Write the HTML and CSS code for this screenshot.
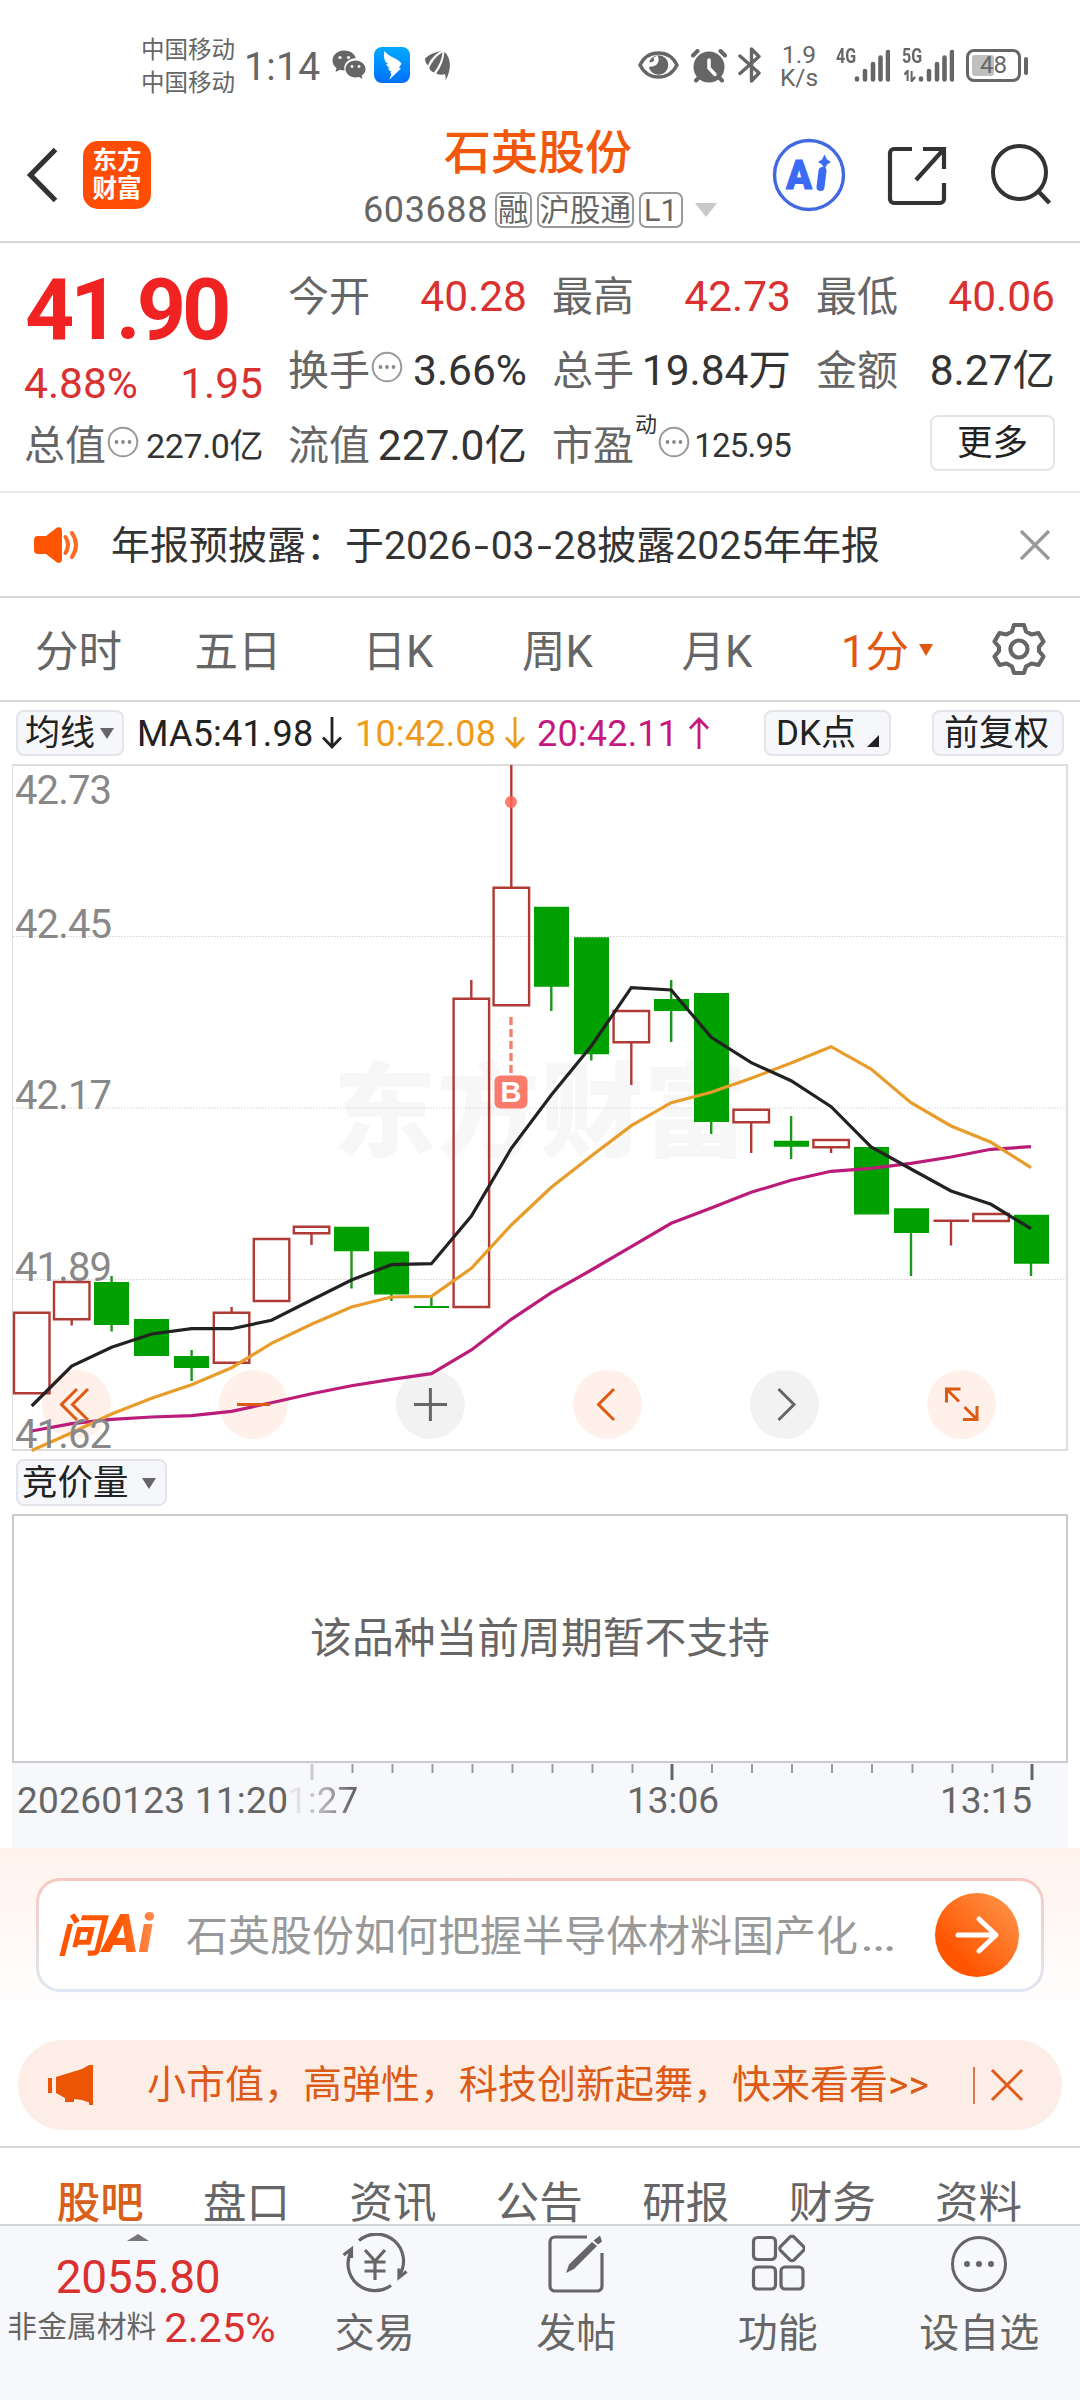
FILE: index.html
```html
<!DOCTYPE html>
<html lang="zh-CN">
<head>
<meta charset="utf-8">
<title>石英股份 603688</title>
<link rel="stylesheet" href="styles.css">
</head>
<body>
<svg class="defs" aria-hidden="true">
  <symbol id="dots" viewBox="0 0 32 32"><circle cx="16" cy="16" r="14.300" fill="none" stroke="#999" stroke-width="2"/><g fill="#888"><circle cx="9.500" cy="16" r="1.900"/><circle cx="16" cy="16" r="1.900"/><circle cx="22.500" cy="16" r="1.900"/></g></symbol>
  <symbol id="bars" viewBox="0 0 36 34"><path d="M3 29.500v1M11 22v8.500M19 15v15.500M26.500 8.500v22M34 3v27.500" fill="none" stroke="#666" stroke-width="4.600" stroke-linecap="round"/></symbol>
</svg>

<header class="status">
  <div class="carrier"><span>中国移动</span><span>中国移动</span></div>
  <span class="clock">1:14</span>
  <svg class="i-wechat" width="34" height="30" viewBox="0 0 34 30"><path d="M12 .5C5.500.500.500 5 .5 10.500c0 3 1.500 5.500 4 7.500L3.500 22l4.500-2.200c1.500.500 3 .600 4.500.600-1.500-7 4-12.200 11.300-12.200C22.500 3.500 18 .500 12 .500z" fill="#666"/><path d="M23.500 10.500c-5.500 0-10 3.700-10 8.500s4.500 8.500 10 8.500c1.200 0 2.400-.2 3.500-.500l3.500 2-.800-3.300c2.300-1.600 3.800-4 3.800-6.700 0-4.800-4.500-8.500-10-8.500z" fill="#666"/><g fill="#fff"><circle cx="8" cy="7.500" r="1.600"/><circle cx="16.500" cy="7.500" r="1.600"/><circle cx="20" cy="16.500" r="1.400"/><circle cx="27" cy="16.500" r="1.400"/></g></svg>
  <svg class="i-wing" width="36" height="36" viewBox="0 0 36 36"><defs><linearGradient id="bl" x1="0" y1="0" x2="0" y2="1"><stop offset="0" stop-color="#0af"/><stop offset="1" stop-color="#0070fb"/></linearGradient></defs><rect width="36" height="36" rx="8" fill="url(#bl)"/><path d="M10.500 4C9.500 8 10 12 11.500 15l3 2-2.300-.3c.6 2 1.800 3.600 4 4.600l-2.300.2c1 1.700 2 2.700 3.800 3.300l-1.700 1.200 1.500.8-2.300 6L27 21.500l-2-.5 2.500-4.500C24 11 14.500 10 10.500 4z" fill="#fff"/></svg>
  <svg class="i-leaf" width="26" height="30" viewBox="0 0 26 30"><g fill="#666"><path d="M0 7.500C5 3 10 1 16.500 0 9.500 3.500 5.500 8 3 14.500 1 12.500 0 10.500 0 7.500z"/><path d="M17.500 1.200C17 8 14 15 9 21.500 6.500 20.500 5 19 4.200 17 7.500 9.500 11.500 5 17.500 1.200z"/><path d="M19.500.8C26 7 27 18 20.500 29.500c.3-3 .2-5-.7-6.500-2.800 1-5.800.8-8.600-.6C16 16 18.800 9 19.500.800z"/></g></svg>
  <svg class="i-eye" width="41" height="28" viewBox="0 0 41 28"><path d="M2 14C6 6 13 2 20.500 2S35 6 39 14C35 22 28 26 20.500 26S6 22 2 14z" fill="none" stroke="#666" stroke-width="3.400"/><circle cx="20.500" cy="14" r="9.800" fill="#666"/><path d="M17.500 5.500c2.500 5-.5 8.500-7 8" fill="none" stroke="#fff" stroke-width="4.500"/></svg>
  <svg class="i-alarm" width="36" height="34" viewBox="0 0 36 34"><circle cx="18" cy="18" r="15.500" fill="#666"/><path d="M2 6.500L6.500 2M34 6.500L29.500 2M5 31.500l3-3M31 31.500l-3-3" stroke="#666" stroke-width="4" stroke-linecap="round"/><path d="M18 11v8l6 6.500" fill="none" stroke="#fff" stroke-width="3.500" stroke-linecap="round"/></svg>
  <svg class="i-bt" width="24" height="36" viewBox="0 0 24 36"><path d="M2 9l19 17-7.500 8V2L21 9.500 2 26.500" fill="none" stroke="#666" stroke-width="3.400" stroke-linejoin="round" stroke-linecap="round"/></svg>
  <div class="speed"><span>1.9</span><span>K/s</span></div>
  <span class="gen gen4">4G</span>
  <svg class="i-sig1" width="36" height="34"><use href="#bars"/></svg>
  <div class="gen gen5"><span>5G</span><svg width="16" height="12" viewBox="0 0 16 12"><path d="M1 4.500L5 1v10M10 1v10l4.500-4" fill="none" stroke="#666" stroke-width="2.600"/></svg></div>
  <svg class="i-sig2" width="36" height="34"><use href="#bars"/></svg>
  <div class="battery"><i></i><b>48</b></div><i class="nub"></i>
</header>

<nav class="head">
  <svg class="i-back" width="32" height="56" viewBox="0 0 32 56"><path d="M29.500 2.500L4.500 28l25 25.500" fill="none" stroke="#333" stroke-width="5.200"/></svg>
  <div class="logo"><span>东方</span><span>财富</span></div>
  <div class="title">
    <h1>石英股份</h1>
    <div class="code"><span class="num">603688</span><span class="tag">融</span><span class="tag">沪股通</span><span class="tag l1">L1</span><i class="tri"></i></div>
  </div>
  <svg class="i-ai" width="74" height="74" viewBox="0 0 74 74"><circle cx="37" cy="37" r="34.500" fill="none" stroke="#4169e1" stroke-width="3.400"/><text x="14" y="51" class="aitext" textLength="26" lengthAdjust="spacingAndGlyphs">A</text><path d="M50.500 33l-2 16" stroke="#3b6af5" stroke-width="8" stroke-linecap="round"/><path d="M52.500 16.500l2.500 5 4 2.500-4 2.500-2.500 5-2.500-5-4-2.500 4-2.500z" fill="#3b6af5"/></svg>
  <svg class="i-share" width="60" height="60" viewBox="0 0 60 60"><path d="M25 3H7a4 4 0 0 0-4 4v46a4 4 0 0 0 4 4h46a4 4 0 0 0 4-4V37M36 3h21v20M57 3L29 34" fill="none" stroke="#333" stroke-width="4.200"/></svg>
  <svg class="i-search" width="62" height="62" viewBox="0 0 62 62"><circle cx="29.500" cy="29.500" r="26.500" fill="none" stroke="#333" stroke-width="4"/><path d="M48 48l11.500 12" stroke="#333" stroke-width="4.400"/></svg>
</nav>

<section class="quote">
  <div class="last"><div class="price">41.90</div><div class="chg"><span>4.88%</span><span>1.95</span></div></div>
  <div class="cell"><label>今开</label><b class="up">40.28</b></div>
  <div class="cell"><label>最高</label><b class="up">42.73</b></div>
  <div class="cell"><label>最低</label><b class="up">40.06</b></div>
  <div class="cell"><label>换手</label><svg class="dots" width="32" height="32"><use href="#dots"/></svg><b>3.66%</b></div>
  <div class="cell"><label>总手</label><b>19.84万</b></div>
  <div class="cell"><label>金额</label><b>8.27亿</b></div>
  <div class="cell"><label>总值</label><svg class="dots" width="32" height="32"><use href="#dots"/></svg><b class="sm">227.0亿</b></div>
  <div class="cell"><label>流值</label><b>227.0亿</b></div>
  <div class="cell"><label>市盈</label><sup>动</sup><svg class="dots" width="32" height="32"><use href="#dots"/></svg><b class="sm pe">125.95</b></div>
  <div class="cell last-cell"><button class="more">更多</button></div>
</section>

<section class="notice">
  <svg width="46" height="38" viewBox="0 0 46 38"><path d="M0 14a4 4 0 0 1 4-4h8L23 1.500Q28 0 28 5v28q0 5-5 3.500L12 28H4a4 4 0 0 1-4-4z" fill="#ff5500"/><path d="M31.500 11q5 8 0 16M38 7q8 12 0 24" fill="none" stroke="#ff6a20" stroke-width="4" stroke-linecap="round"/></svg>
  <p>年报预披露：于2026<i>-</i>03<i>-</i>28披露2025年年报</p>
  <svg class="close" width="32" height="32" viewBox="0 0 32 32"><path d="M2 2l28 28M30 2L2 30" stroke="#999" stroke-width="3.200"/></svg>
</section>

<nav class="periods">
  <span>分时</span><span class="p2">五日</span><span>日K</span><span>周K</span><span>月K</span><span class="on">1分<i></i></span>
  <svg width="54" height="54" viewBox="0 0 54 54"><g fill="none" stroke="#666" stroke-width="4.200"><path d="M22 3h10l2 6.500 5.500 3 7-1.500 5 8.500-4.500 5.500v4l4.500 5.500-5 8.500-7-1.500-5.500 3L32 51H22l-2-6.500-5.500-3-7 1.500-5-8.500L7 29v-4l-4.500-5.500 5-8.500 7 1.500 5.500-3z" stroke-linejoin="round"/><circle cx="27" cy="27" r="8.500"/></g></svg>
</nav>

<section class="ma">
  <button class="b-ma">均线<i></i></button>
  <span class="m5">MA5:41.98</span><svg width="20" height="32" viewBox="0 0 20 32"><path d="M10 0v30M1 20.500l9 9.500 9-9.500" fill="none" stroke="#222" stroke-width="2.800"/></svg>
  <span class="m10">10:42.08</span><svg width="20" height="32" viewBox="0 0 20 32"><path d="M10 0v30M1 20.500l9 9.500 9-9.500" fill="none" stroke="#f09a1a" stroke-width="2.800"/></svg>
  <span class="m20">20:42.11</span><svg width="20" height="32" viewBox="0 0 20 32"><path d="M10 32V2M1 11.500L10 2l9 9.500" fill="none" stroke="#c41a80" stroke-width="2.800"/></svg>
  <button class="b-dk">DK点<i></i></button>
  <button class="b-fq">前复权</button>
</section>

<svg class="chart" width="1080" height="698" viewBox="0 757 1080 698">
  <text class="wm" x="333" y="1149" textLength="414">东方财富</text>
  <g class="frame"><path d="M12.500 765V1450"/><path d="M12 765H1067V1450H12" stroke-width="2.200"/></g>
  <path class="grid" d="M13 936.500H1066M13 1108H1066M13 1279.500H1066"/>
  <g class="ctl">
    <g fill="#fff1ea"><circle cx="76.400" cy="1404.400" r="34.500"/><circle cx="253.400" cy="1404.400" r="34.500"/><circle cx="607.500" cy="1404.400" r="34.500"/><circle cx="961.600" cy="1404.400" r="34.500"/></g>
    <g fill="#f2f2f2"><circle cx="430.400" cy="1404.400" r="34.500"/><circle cx="784.500" cy="1404.400" r="34.500"/></g>
  </g>
  <path class="up-k" d="M14 1312.700h35.500v80.600h-35.500zM54 1282h35.500v37.300h-35.500zM71.700 1319v6.500M213.800 1312.700h35.500v50h-35.500zM231.600 1307v6M253.800 1239h35.500v62h-35.500zM293.800 1226.700h35.500v6.600h-35.500zM311.500 1233v12M453.600 998.700h35.500v308.300h-35.500zM471.300 980v18.500M493.600 887.700h35.500v117.600h-35.500zM511.300 765v122.500M613.600 1011h35.500v31.300h-35.500zM631.300 1042v43M733.500 1109.700h35.500v12.600h-35.500zM751.200 1122v31M813.400 1140h35.500v7.300h-35.500zM831.100 1147v6M933.500 1220.700h35.500M951 1221v24.500M973.300 1214h35.500v7h-35.500z"/>
  <path class="dn-w" d="M111.600 1276v55.500M191.600 1350v31M351.500 1251v37.500M391.400 1294v7M431.400 1296v11M551.300 986v25M591.300 1054v6.500M671.200 980v62M711.200 1122v12M791.100 1116v43M911 1233v43M1031 1263v13"/>
  <path class="dn-b" d="M94 1282h35v43h-35zM134 1319h35v37h-35zM174 1356h35v12h-35zM334 1226.700h35v24.600h-35zM374 1251.500h35v43h-35zM414 1306h35v2h-35zM534 906.700h35v80h-35zM574 937.300h35v117h-35zM654 999h35v12h-35zM694 993h35v129h-35zM774 1140.700h35v6h-35zM854 1147h35v67.500h-35zM894 1208.300h35v24.700h-35zM1014 1214.700h35v49h-35z"/>
  <polyline class="l20" points="31.700,1431 71.700,1423.700 111.600,1419.300 151.600,1417 191.600,1415.700 231.600,1411.300 271.500,1402.700 311.500,1393.700 351.500,1385.700 391.400,1379.300 431.400,1373.700 471.400,1350 511.300,1319.300 551.300,1292.700 591.300,1270 631.300,1246.700 671.200,1223.300 711.200,1208 751.200,1192.300 791.100,1180.300 831.100,1171.300 871.100,1168.300 911,1163.300 951,1157 991,1149.300 1031,1146.700"/>
  <polyline class="l10" points="31.700,1450.500 71.700,1432.700 111.600,1414 151.600,1398.300 191.600,1384.700 231.600,1367.700 271.500,1343.300 311.500,1324.300 351.500,1307 391.400,1297 431.400,1296.300 471.400,1268.300 511.300,1225 551.300,1187.300 591.300,1156 631.300,1125.700 671.200,1102.700 711.200,1092.300 751.200,1078.300 791.100,1063 831.100,1046.700 871.100,1069 911,1102.700 951,1126 991,1142.300 1031,1167.700"/>
  <polyline class="l5" points="31.700,1406 71.700,1366 111.600,1347.300 151.600,1334 191.600,1328.700 231.600,1328.700 271.500,1320.300 311.500,1300 351.500,1280 391.400,1264.700 431.400,1263.700 471.400,1216 511.300,1148.300 551.300,1095 591.300,1046 631.300,987.700 671.200,990 711.200,1037.300 751.200,1062.700 791.100,1080.700 831.100,1106.700 871.100,1147 911,1169 951,1191 991,1204.300 1031,1228.700"/>
  <g fill="none" stroke-width="3"><path class="or" d="M77 1389l-15.500 15.500 15.500 15.500M88 1389l-15.500 15.500 15.500 15.500M237 1404.500h33M614 1389l-15.500 15.500 15.500 15.500"/><path stroke="#666" d="M414 1404.500h33M430.400 1388v33M778.500 1389l15.500 15.500-15.500 15.500"/><path class="or" d="M946.500 1402.500v-13.500h14M946.500 1389l12.500 12.500M963 1419.500h14v-13.500M977 1419.500l-12.500-12.500"/></g>
  <circle cx="511" cy="802" r="6" fill="#ff6455" fill-opacity=".85"/>
  <path d="M511 1017v58" stroke="#f08070" stroke-width="3.400" stroke-dasharray="8 4"/>
  <rect x="494.500" y="1075.500" width="33" height="33" rx="6" fill="#fa7b6b"/>
  <text class="bmark" x="511" y="1102">B</text>
  <g class="lab"><text x="15" y="804" textLength="97">42.73</text><text x="15" y="938" textLength="97">42.45</text><text x="15" y="1109" textLength="97">42.17</text><text x="15" y="1281" textLength="97">41.89</text><text x="15" y="1448" textLength="97">41.62</text></g>
</svg>

<div class="sub"><button class="b-vol">竞价量<i></i></button></div>
<section class="empty">该品种当前周期暂不支持</section>
<section class="axis">
  <svg width="1056" height="18" viewBox="12 0 1056 18"><path d="M312 1v16" stroke="#ccc" stroke-width="3"/><path d="M352.500 1v9M392.500 1v9M432.500 1v9M472.500 1v9M512.500 1v9M552.500 1v9M592.500 1v9M632.500 1v9M712 1v9M752 1v9M792 1v9M832 1v9M872 1v9M912.500 1v9M952.500 1v9M992.500 1v9" stroke="#999" stroke-width="2"/><path d="M672 1v16M1032 1v16" stroke="#666" stroke-width="3"/></svg>
  <div class="times"><span class="t1">20260123 11:20</span><span class="fade">1:27</span><span class="t2">13:06</span><span class="t3">13:15</span></div>
</section>

<section class="ask">
  <div class="askbox"><span class="asklogo"><b>问</b>Ai</span><p>石英股份如何把握半导体材料国产化<em>…</em></p>
    <svg width="84" height="84" viewBox="0 0 84 84"><defs><linearGradient id="og" x1="1" y1="0" x2=".25" y2=".75"><stop offset="0" stop-color="#ff9a50"/><stop offset="1" stop-color="#ff5500"/></linearGradient></defs><circle cx="42" cy="42" r="42" fill="url(#og)"/><path d="M23 42h37M44 26l17 16-17 16" fill="none" stroke="#fff" stroke-width="5" stroke-linecap="round" stroke-linejoin="round"/></svg>
  </div>
</section>
<section class="promo">
  <svg width="46" height="40" viewBox="0 0 46 40"><path d="M0 13h4v15H0zM8 12l26-8 7-4h4v40h-4V37.500L34 35l-8-1v3h-9v-4L8 28z" fill="#eb5503"/></svg>
  <p>小市值，高弹性，科技创新起舞，快来看看&gt;&gt;</p>
  <i></i>
  <svg class="pclose" width="34" height="34" viewBox="0 0 34 34"><path d="M2 2l30 30M32 2L2 32" stroke="#e05a1a" stroke-width="3"/></svg>
</section>

<nav class="tabs"><span class="on">股吧</span><span>盘口</span><span>资讯</span><span>公告</span><span>研报</span><span>财务</span><span>资料</span></nav>

<footer class="bottom">
  <div class="index"><i></i><strong>2055.80</strong><div><span>非金属材料</span><b>2.25%</b></div></div>
  <div class="act"><svg width="66" height="60" viewBox="0 0 66 60"><g fill="none" stroke="#666" stroke-width="3.200"><path d="M17 7.500A27 27 0 0 1 57 43M49 52.500A27 27 0 0 1 9.500 17.500"/><path d="M1.500 22L9.500 16v9M57 35.500v9l7.500-6"/><path d="M23 17l10 11 10-11M33 28v19M22.500 29h21M22.500 38h21"/></g></svg><span>交易</span></div>
  <div class="act"><svg width="58" height="60" viewBox="0 0 58 60"><g fill="none" stroke="#666"><path d="M40 4H8a5 5 0 0 0-5 5v44a5 5 0 0 0 5 5h42a5 5 0 0 0 5-5V20" stroke-width="3.200"/></g><path d="M19 40l3-8.500L45 9l5 4-23 23zM46.500 7.500L53 2.500l2 6-4 3z" fill="#666"/></svg><span>发帖</span></div>
  <div class="act"><svg width="54" height="60" viewBox="0 0 54 60"><g fill="none" stroke="#666" stroke-width="3.200"><rect x="2.500" y="4.500" width="22" height="22" rx="4"/><rect x="2.500" y="34" width="22" height="22" rx="4"/><rect x="30" y="34" width="22" height="22" rx="4"/><rect x="31.500" y="6" width="19" height="19" rx="3" transform="rotate(45 41 15.500)"/></g></svg><span>功能</span></div>
  <div class="act"><svg width="60" height="60" viewBox="0 0 60 60"><circle cx="30" cy="31" r="26.500" fill="none" stroke="#666" stroke-width="3"/><g fill="#666"><circle cx="18" cy="31" r="3"/><circle cx="30" cy="31" r="3"/><circle cx="42" cy="31" r="3"/></g></svg><span>设自选</span></div>
</footer>
</body>
</html>
```
FILE: styles.css
```css
* { box-sizing: border-box; margin: 0; padding: 0; }
body { width: 1080px; height: 2400px; overflow: hidden; background: #fff; color: #333; font-family: Roboto, "Noto Sans CJK SC", sans-serif; font-size: 41px; line-height: 1; }
svg { display: block; flex: none; }
i, em { font-style: normal; }
b { font-weight: 400; }
button { font: inherit; color: #222; border: 2px solid #e3e5ea; background: #f6f7fb; border-radius: 8px; display: flex; align-items: center; white-space: nowrap; flex: none; }
span, p { white-space: nowrap; }
.defs { position: absolute; width: 0; height: 0; }

/* status bar */
.status { height: 100px; padding: 36px 0 0 141px; display: flex; align-items: flex-start; color: #666; }
.status > * { flex: none; }
.carrier { width: 103px; display: flex; flex-direction: column; font-size: 23.500px; line-height: 33px; margin-top: -2px; }
.clock { width: 88px; font-size: 39px; line-height: 62px; letter-spacing: .300px; }
.i-wechat { margin-top: 14px; }
.i-wing { margin: 11px 0 0 8px; }
.i-leaf { margin: 15px 0 0 15px; }
.i-eye { margin: 15px 0 0 187px; }
.i-alarm { margin: 13px 0 0 12px; }
.i-bt { margin: 11px 0 0 11px; }
.speed { width: 38px; margin: 7px 0 0 18px; display: flex; flex-direction: column; align-items: center; font-size: 24.500px; line-height: 23px; }
.gen { font-size: 20px; font-weight: 700; line-height: 18px; transform: scaleX(.8); transform-origin: 0 0; }
.gen4 { width: 18px; margin: 11px 0 0 18px; }
.i-sig1 { margin-top: 13px; }
.gen5 { width: 16px; margin: 11px 0 0 12px; display: flex; flex-direction: column; gap: 5px; }
.gen5 svg { width: 20px; }
.i-sig2 { margin-top: 13px; }
.battery { width: 55px; height: 33px; margin: 13px 0 0 12px; border: 3.500px solid #666; border-radius: 8px; padding: 3px; position: relative; }
.battery i { display: block; width: 22px; height: 100%; background: #bfbfbf; border-radius: 3px; }
.battery b { position: absolute; left: 0; right: 0; top: 0; text-align: center; font-size: 24px; line-height: 27px; }
.nub { width: 4px; height: 18px; margin: 21px 0 0 3px; background: #666; border-radius: 2px; }

/* header */
.head { height: 143px; border-bottom: 2px solid #d6d6d6; display: flex; align-items: flex-start; padding-left: 26px; }
.i-back { margin-top: 47px; }
.logo { width: 68px; height: 68px; margin: 41px 0 0 25px; border-radius: 15px; background: #ff4d05; color: #fff; font-weight: 700; font-size: 24.500px; line-height: 28px; display: flex; flex-direction: column; align-items: center; padding-top: 6px; flex: none; }
.title { width: 621px; display: flex; flex-direction: column; flex: none; }
.title h1 { font-size: 47px; line-height: 60px; font-weight: 500; color: #f1580c; margin: 23px 0 0 293px; }
.code { display: flex; align-items: center; color: #666; margin: 8px 0 0 212px; height: 38px; font-size: 36px; }
.code .num { width: 132px; letter-spacing: .600px; }
.tag { height: 36px; border: 2px solid #999; border-radius: 7px; font-size: 30.500px; line-height: 33px; padding: 0 1px; margin-right: 5px; }
.l1 { padding: 0 3px; }
.tri { border: 11px solid transparent; border-top: 14px solid #c9c9c9; border-bottom: 0; margin-left: 7px; }
.i-ai { margin: 38px 0 0 0; }
.aitext { font: 900 40px Roboto, sans-serif; fill: #3b6af5; stroke: #3b6af5; stroke-width: 1; }
.i-share { margin: 46px 0 0 41px; }
.i-search { margin: 43px 0 0 43px; }

/* quote grid */
.quote { height: 250px; padding: 17px 24px 0 24px; border-bottom: 2px solid #ececec; display: grid; grid-template-columns: 239px 239px 239px 239px; grid-template-rows: 74px 74px 76px; column-gap: 25px; }
.last { grid-row: 1 / 3; color: #f02222; }
.price { height: 100px; line-height: 100px; font-size: 86px; font-weight: 700; letter-spacing: -4px; margin-left: 1px; }
.chg { display: flex; justify-content: space-between; line-height: 48px; color: #d93030; font-size: 42.500px; }
.cell { display: flex; align-items: center; line-height: 74px; white-space: nowrap; }
.cell label { color: #666; }
.cell b { margin-left: auto; font-size: 42.500px; }
.cell .up { color: #d93030; }
.cell .sm { font-size: 34px; letter-spacing: -.400px; }
.cell .pe { font-size: 33px; letter-spacing: -.800px; }
.cell sup { font-size: 22px; align-self: flex-start; line-height: 34px; margin-left: 1px; }
.dots { margin: -8px 0 0 1px; }
.more { margin-left: auto; width: 125px; height: 56px; background: #fff; justify-content: center; font-size: 35.500px; margin-top: -6px; }

.notice { height: 105px; border-bottom: 2px solid #d6d6d6; display: flex; align-items: center; padding: 1px 29px 0 34px; }
.notice p { font-size: 39px; margin-left: 31px; margin-top: 2px; }
.notice p i { display: inline-block; width: 19px; text-align: center; transform: scaleX(1.350); }
.close { margin-left: auto; }

.periods { height: 104px; border-bottom: 2px solid #d6d6d6; display: flex; align-items: center; padding-left: 35px; font-size: 43.500px; color: #666; }
.periods span { width: 159.500px; line-height: 98px; padding-top: 7px; }
.periods .p2 { width: 168px; }
.periods .on { width: 150.500px; color: #e0570f; display: flex; align-items: center; }
.periods .on i { border: 7px solid transparent; border-top: 12px solid #e0570f; border-bottom: 0; margin: -6px 0 0 10px; }

.ma { height: 55px; display: flex; align-items: center; padding: 6px 16px 0 16px; font-size: 36px; }
.ma button { height: 46px; font-size: 35px; padding: 1px 7px 0; }
.ma span { padding-top: 2px; }
.b-ma { width: 108px; }
.b-ma i, .b-vol i { border: 7.500px solid transparent; border-top: 11px solid #666; border-bottom: 0; margin-left: 5px; }
.m5 { width: 185px; margin-left: 13px; color: #222; letter-spacing: .200px; }
.m10 { width: 150px; margin-left: 13px; color: #f09a1a; letter-spacing: .200px; }
.m20 { width: 152px; margin-left: 12px; color: #c41a80; letter-spacing: .200px; }
.ma .b-dk { width: 127px; margin-left: 55px; padding-left: 10px; }
.b-dk i { border: 6px solid transparent; border-right-color: #222; border-bottom-color: #222; margin: 16px 0 0 11px; }
.ma .b-fq { width: 132px; margin-left: auto; padding-left: 10px; }

/* chart */
.frame path { fill: none; stroke: #dedede; }
.grid { stroke: #d4d4d4; stroke-width: 1; stroke-dasharray: 1.500 1.500; }
.wm { font: 900 103px "Noto Sans CJK SC", sans-serif; fill: #f7f7f7; }
.up-k { fill: none; stroke: #b03a36; stroke-width: 2.400; }
.dn-w { stroke: #1c961c; stroke-width: 2.400; }
.dn-b { fill: #00a000; }
.l5, .l10, .l20 { fill: none; stroke-width: 3.200; }
.l5 { stroke: #222; }
.l10 { stroke: #e89c2a; }
.l20 { stroke: #bb1c7a; }
.or { stroke: #dc5a14; }
.bmark { font: 700 29px "Liberation Sans", sans-serif; fill: #fff; text-anchor: middle; }
.lab text { font-size: 40px; fill: #888; }

.sub { height: 59px; padding: 4px 0 0 16px; }
.b-vol { width: 151px; height: 47px; font-size: 35.500px; padding: 2px 4px 0; }
.b-vol i { margin-left: 13px; }
.empty { height: 249px; margin: 0 12px; border: 2px solid #ccc; display: flex; align-items: center; justify-content: center; font-size: 41.800px; color: #666; }
.axis { height: 85px; margin: 0 12px; background: #f7f8fb; }
.times { display: flex; color: #666; font-size: 37px; line-height: 40px; padding: 0 0 0 5px; }
.times span { flex: none; }
.times .t1 { width: 270px; letter-spacing: .250px; }
.times .fade { width: 340px; color: transparent; background: linear-gradient(90deg, #eee 0, #ddd 14px, #aaa 40px, #666 65px); -webkit-background-clip: text; background-clip: text; }
.times .t2 { width: 313px; }
.times .t3 { width: auto; }

.ask { height: 192px; background: linear-gradient(#fff2ed, #fff 88%); padding: 30px 36px 0; }
.askbox { height: 114px; border: 3px solid transparent; border-radius: 24px; background: linear-gradient(#fff, #fff) padding-box, linear-gradient(#f6c8c0, #dfe7f3) border-box; display: flex; align-items: center; padding: 0 22px 0 18px; }
.asklogo { width: 102px; margin-right: 27px; font-size: 54px; font-weight: 900; font-style: italic; color: transparent; background: linear-gradient(90deg, #ff5500 60%, #ff9055 98%); -webkit-background-clip: text; background-clip: text; line-height: 60px; }
.asklogo b { font-size: 46px; font-weight: 700; }
.askbox p { font-size: 42px; color: #999; margin-top: 3px; }
.askbox em { display: inline-block; margin-left: 2px; transform: scaleX(1.300); transform-origin: 0 0; }
.askbox svg { margin-left: auto; }

.promo { height: 90px; margin: 0 18px; border-radius: 45px; background: #fceee6; display: flex; align-items: center; padding-left: 30px; color: #dd5a16; }
.promo p { font-size: 39px; margin-left: 53px; width: 826px; line-height: 60px; }
.promo i { width: 2px; height: 37px; background: #dd7a4a; }
.pclose { margin-left: 15px; }

.tabs { height: 78px; margin-top: 16px; border-top: 2px solid #d6d6da; display: flex; padding: 36px 27px 0; font-size: 43.500px; line-height: 40px; color: #666; }
.tabs span { flex: none; width: 146.400px; text-align: center; }
.tabs .on { color: #d9601a; font-weight: 500; }

.bottom { height: 176px; background: #f7f8fb; border-top: 2px solid #d3d5dc; display: flex; }
.index { width: 274px; padding-left: 2px; flex: none; display: flex; flex-direction: column; align-items: center; }
.index i { border: 11px solid transparent; border-bottom: 7px solid #777; border-top: 0; margin-top: 8px; }
.index strong { font-weight: 400; color: #d93030; font-size: 46px; line-height: 60px; margin-top: 6px; letter-spacing: -.400px; }
.index div { display: flex; align-items: center; gap: 8px; margin-left: 7px; font-size: 29.800px; line-height: 36px; color: #666; margin-top: 1px; white-space: nowrap; }
.index b { color: #d93030; font-size: 41.500px; margin-top: 2px; }
.act { width: 201.500px; flex: none; display: flex; flex-direction: column; align-items: center; padding-top: 7px; font-size: 40px; color: #666; }
.act span { line-height: 60px; margin-top: 11px; }
```
